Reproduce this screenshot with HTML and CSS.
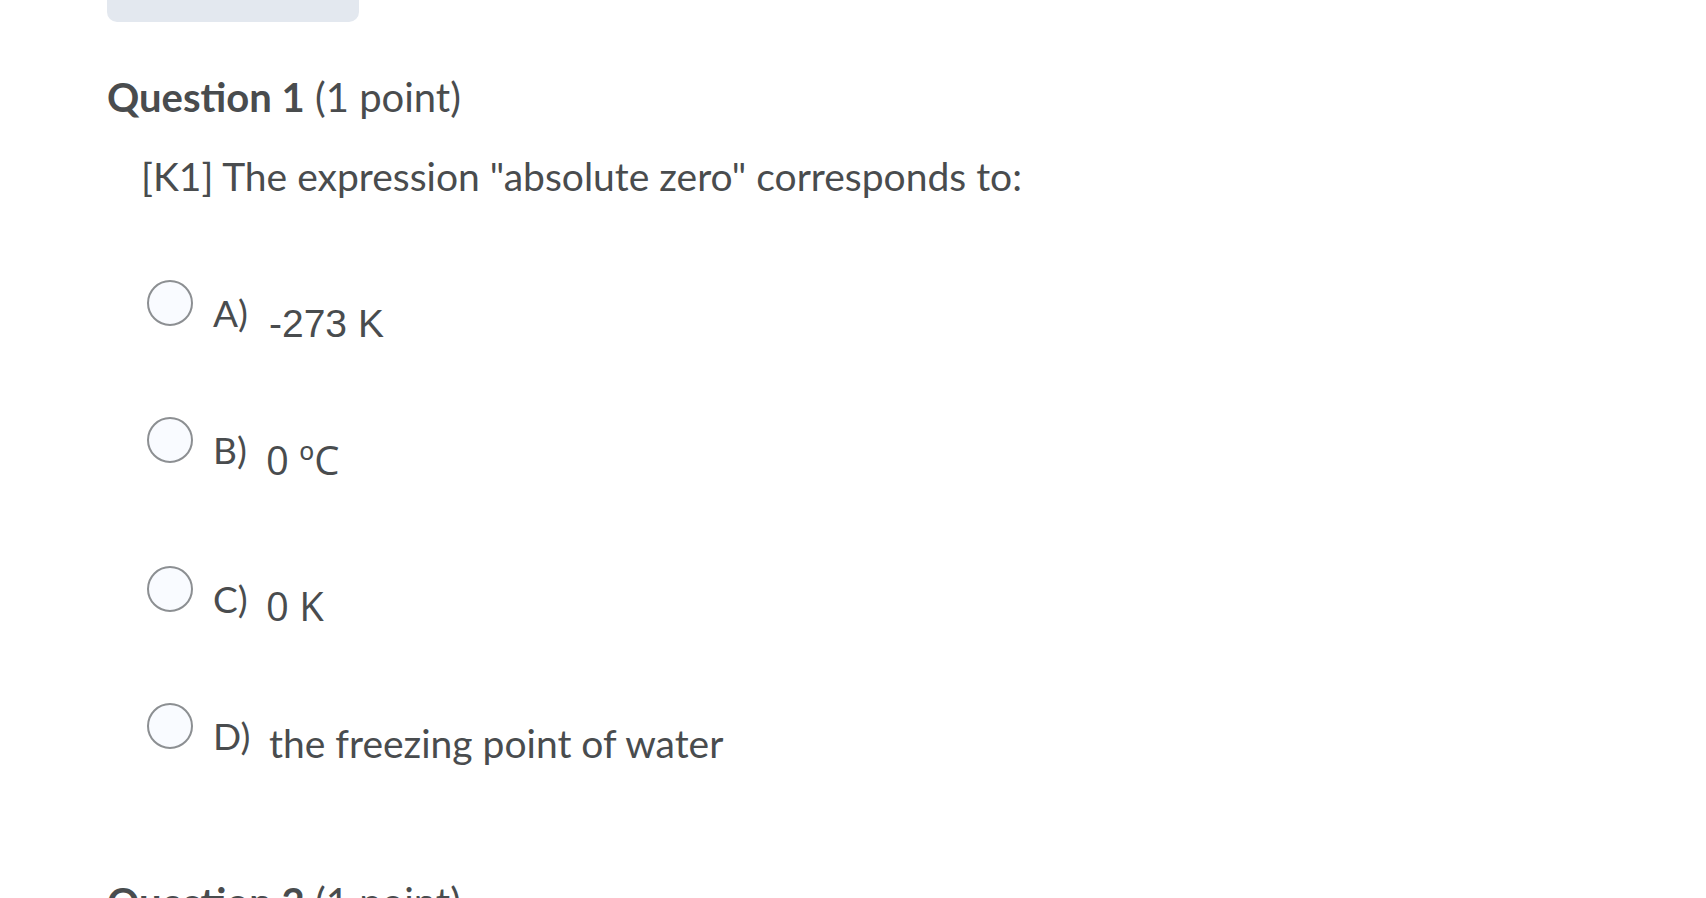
FILE: index.html
```html
<!DOCTYPE html>
<html lang="en">
<head>
    <meta charset="UTF-8">
    <meta name="viewport" content="width=device-width, initial-scale=1.0">
    <title>Quiz</title>
    <link rel="stylesheet" href="styles.css">
</head>
<body>
    <div class="page">
        <div class="toolbar">
            <div class="toolbar-box"></div>
        </div>

        <section class="question">
            <h2 class="q-title"><strong>Question 1</strong> (1 point)</h2>
            <p class="q-text">[K1] The expression "absolute zero" corresponds to:</p>

            <div class="options">
                <label class="option">
                    <span class="radio"></span>
                    <span class="opt-letter">A)</span>
                    <span class="opt-answer ans-arial">-273 K</span>
                </label>
                <label class="option option-tall">
                    <span class="radio"></span>
                    <span class="opt-letter">B)</span>
                    <span class="opt-answer ans-open">0 ºC</span>
                </label>
                <label class="option">
                    <span class="radio"></span>
                    <span class="opt-letter">C)</span>
                    <span class="opt-answer ans-open ans-c">0 K</span>
                </label>
                <label class="option">
                    <span class="radio"></span>
                    <span class="opt-letter">D)</span>
                    <span class="opt-answer ans-lato">the freezing point of water</span>
                </label>
            </div>
        </section>

        <section class="question">
            <h2 class="q-title"><strong>Question 2</strong> (1 point)</h2>
        </section>
    </div>
</body>
</html>
```

FILE: styles.css
```css
* { margin: 0; padding: 0; box-sizing: border-box; }
body {
    background: #ffffff;
    font-family: Lato, "Open Sans", sans-serif;
    color: #494c4e;
    overflow: hidden;
}
.page {
    padding-left: 107px;
}
.toolbar {
    margin-top: -26px;
    margin-bottom: 51px;
}
.toolbar-box {
    width: 252px;
    height: 48px;
    background: #e3e8ef;
    border-radius: 10px;
}
.q-title {
    font-size: 40px;
    line-height: 48px;
    font-weight: 400;
}
.q-title strong {
    font-weight: 700;
}
.q-text {
    font-size: 39px;
    line-height: 47px;
    margin-top: 32px;
    margin-left: 34px;
}
.options {
    margin-top: 80px;
    margin-left: 40px;
    margin-bottom: 38px;
}
.option {
    display: flex;
    align-items: flex-start;
    min-height: 137px;
    cursor: pointer;
}
.option-tall {
    min-height: 149px;
}
.radio {
    width: 46px;
    height: 46px;
    border: 2px solid #8c8f92;
    border-radius: 50%;
    background: #f9fbff;
    flex-shrink: 0;
}
.opt-letter {
    width: 53px;
    margin-left: 20px;
    margin-top: 11px;
    font-size: 37px;
    line-height: 44px;
}
.opt-answer {
    line-height: 43px;
}
.ans-arial {
    font-family: "Liberation Sans", Arial, sans-serif;
    font-size: 39px;
    margin-top: 22px;
    margin-left: 3px;
}
.ans-open {
    font-family: "Open Sans", sans-serif;
    font-size: 40px;
    margin-top: 21px;
}
.ans-c {
    margin-top: 18px;
}
.ans-lato {
    font-size: 39px;
    margin-top: 19px;
    margin-left: 3px;
}
```
